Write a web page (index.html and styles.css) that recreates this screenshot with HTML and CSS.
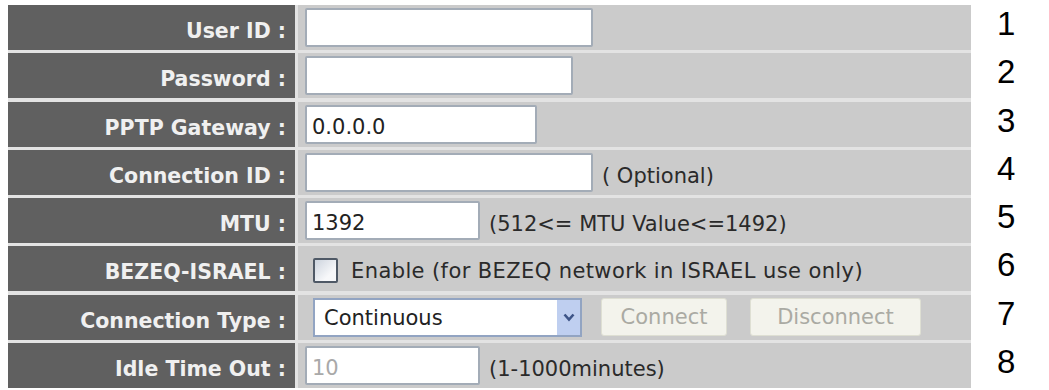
FILE: index.html
```html
<!DOCTYPE html>
<html lang="en">
<head>
    <meta charset="UTF-8">
    <meta name="viewport" content="width=device-width, initial-scale=1.0">
    <link rel="stylesheet" href="styles.css">
    <title>PPTP Settings</title>
</head>
<body>
    <div class="page">
        <form class="settings" id="pptpForm">
            <label class="label" for="userId">User ID :</label>
            <div class="field">
                <input type="text" id="userId" class="input w-user">
            </div>

            <label class="label" for="password">Password :</label>
            <div class="field">
                <input type="password" id="password" class="input w-pass">
            </div>

            <label class="label" for="gateway">PPTP Gateway :</label>
            <div class="field">
                <input type="text" id="gateway" class="input w-gateway" value="0.0.0.0">
            </div>

            <label class="label" for="connId">Connection ID :</label>
            <div class="field">
                <input type="text" id="connId" class="input w-user">
                <span class="note">( Optional)</span>
            </div>

            <label class="label" for="mtu">MTU :</label>
            <div class="field">
                <input type="text" id="mtu" class="input w-small" value="1392">
                <span class="note">(512&lt;= MTU Value&lt;=1492)</span>
            </div>

            <label class="label" for="bezeq">BEZEQ-ISRAEL :</label>
            <div class="field">
                <input type="checkbox" id="bezeq" class="check">
                <span class="note check-note">Enable (for BEZEQ network in ISRAEL use only)</span>
            </div>

            <label class="label" for="connType">Connection Type :</label>
            <div class="field">
                <div class="select-wrap">
                    <select id="connType" class="select">
                        <option>Continuous</option>
                        <option>Connect On Demand</option>
                        <option>Manual</option>
                    </select>
                    <span class="select-arrow">
                        <svg width="12" height="9" viewBox="0 0 12 9">
                            <path d="M1.5 1.5 L6 6.5 L10.5 1.5" fill="none" stroke="#3d5487" stroke-width="2.6"/>
                        </svg>
                    </span>
                </div>
                <button type="button" class="btn btn-connect" disabled>Connect</button>
                <button type="button" class="btn btn-disconnect" disabled>Disconnect</button>
            </div>

            <label class="label" for="idle">Idle Time Out :</label>
            <div class="field">
                <input type="text" id="idle" class="input w-small idle" value="10" disabled>
                <span class="note">(1-1000minutes)</span>
            </div>
        </form>

        <div class="steps">
            <div class="step">1</div>
            <div class="step">2</div>
            <div class="step">3</div>
            <div class="step">4</div>
            <div class="step">5</div>
            <div class="step">6</div>
            <div class="step">7</div>
            <div class="step">8</div>
        </div>
    </div>
</body>
</html>
```

FILE: styles.css
```css
body {
    margin: 0;
    padding: 5px 0 0 8px;
    background-color: #fff;
    font-family: "DejaVu Sans", sans-serif;
}

.page {
    display: flex;
    align-items: flex-start;
}

.settings {
    display: grid;
    grid-template-columns: 287px 673px;
    grid-auto-rows: 45px;
    gap: 3.3px 3px;
    margin: 0;
    background-color: #e3e3e3;
}

.label {
    display: flex;
    align-items: center;
    justify-content: flex-end;
    padding: 7px 9px 0 0;
    background-color: #606060;
    color: #f0f0f0;
    font-size: 20.5px;
    font-weight: bold;
    white-space: nowrap;
}

.field {
    display: flex;
    align-items: center;
    padding-left: 7px;
    background-color: #cbcbcb;
    color: #2a2a2a;
    font-size: 21px;
    white-space: nowrap;
}

.input {
    box-sizing: border-box;
    height: 39px;
    padding: 5px 5px 0;
    border: 2px solid #a3acb7;
    border-radius: 2px;
    background-color: #fff;
    color: #222;
    font-family: "DejaVu Sans", sans-serif;
    font-size: 21px;
}

.w-user {
    width: 288px;
}

.w-pass {
    width: 268px;
}

.w-gateway {
    width: 232px;
}

.w-small {
    width: 175px;
}

.idle {
    color: #a9a9a9;
}

.note {
    margin-left: 9px;
    padding-top: 7px;
}

.check {
    appearance: none;
    box-sizing: border-box;
    width: 25px;
    height: 25px;
    margin: 4px 0 0 8px;
    border: 2px solid #4f5966;
    border-radius: 2px;
    background: linear-gradient(135deg, #cdd4de, #f7f8fa 70%);
}

.check-note {
    margin-left: 13px;
    padding-top: 5px;
    letter-spacing: 0.4px;
}

.select-wrap {
    position: relative;
    margin-left: 8px;
}

.select {
    appearance: none;
    box-sizing: border-box;
    width: 269px;
    height: 39px;
    padding: 2px 0 0 9px;
    border: 2px solid #92a4c2;
    border-radius: 0;
    background-color: #fff;
    color: #222;
    font-family: "DejaVu Sans", sans-serif;
    font-size: 21px;
}

/* dropdown button drawn over the right end of the select */
.select-arrow {
    position: absolute;
    top: 2px;
    right: 2px;
    bottom: 2px;
    width: 23px;
    display: flex;
    align-items: center;
    justify-content: center;
    background-color: #bfcff0;
    pointer-events: none;
}

.btn {
    box-sizing: border-box;
    height: 38px;
    border: 1px solid #dedfd3;
    border-radius: 3px;
    background-color: #f3f3ec;
    color: #aaaaa3;
    font-family: "DejaVu Sans", sans-serif;
    font-size: 21px;
}

.btn-connect {
    width: 126px;
    margin-left: 19px;
}

.btn-disconnect {
    width: 171px;
    margin-left: 23px;
}

.steps {
    display: flex;
    flex-direction: column;
    gap: 3.3px;
    margin-left: 26px;
}

.step {
    height: 45px;
    line-height: 37px;
    font-family: "Liberation Sans", Arial, sans-serif;
    font-size: 33px;
    color: #000;
}
```
